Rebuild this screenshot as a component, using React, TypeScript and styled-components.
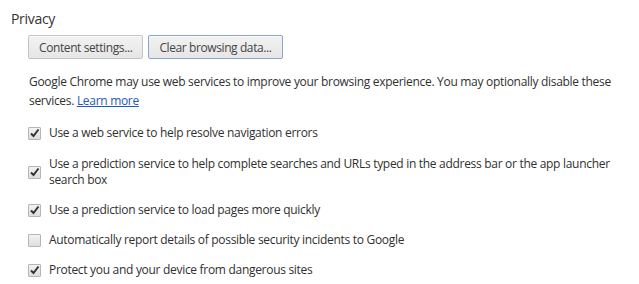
import React from "react";
import styled, { createGlobalStyle } from "styled-components";

const Global = createGlobalStyle`
  html, body { margin: 0; padding: 0; background: #fff; }
  body { font-family: "Open Sans", "Noto Sans", sans-serif; color: #303030; letter-spacing: -0.3px; }
`;

const Page = styled.div`
  padding: 9px 0 0 11px;
  width: 628px;
`;

const Title = styled.h3`
  margin: 0;
  font-size: 14px;
  font-weight: 400;
  line-height: 20px;
  color: #333;
`;

const Body = styled.div`
  padding-left: 17px;
  margin-top: 6px;
`;

const ButtonRow = styled.div`
  display: flex;
  gap: 5px;
`;

const Button = styled.button<{ $focused?: boolean }>`
  height: 24px;
  padding: 0 10px;
  font-family: inherit;
  letter-spacing: -0.4px;
  font-size: 12px;
  color: #444;
  border-radius: 2px;
  border: 1px solid ${(p) => (p.$focused ? "#8aa6cc" : "#c4c4c4")};
  background: linear-gradient(#f2f2f2, #e6e6e6);
  box-shadow: inset 0 1px 0 #fbfbfb;
`;

const Para = styled.p`
  margin: 13px 0 0 1px;
  font-size: 12px;
  line-height: 19px;
  width: 595px;
`;

const Link = styled.a`
  color: #2458b8;
  text-decoration: underline;
`;

const List = styled.div`
  margin-top: 15px;
  display: flex;
  flex-direction: column;
  gap: 14px;
`;

const Row = styled.label<{ $multi?: boolean }>`
  display: flex;
  align-items: center;
  gap: 8px;
  font-size: 12px;
  line-height: 16px;
  margin-top: ${(p) => (p.$multi ? "1px" : "0")};
`;

const Box = styled.span`
  flex: none;
  width: 13px;
  height: 13px;
  box-sizing: border-box;
  border: 1px solid #b5b5b5;
  border-radius: 1px;
  background: linear-gradient(#f2f2f2, #dedede);
  display: flex;
  align-items: center;
  justify-content: center;
`;

const Label = styled.span`
  max-width: 575px;
`;

const Check = ({ checked }: { checked: boolean }) => (
  <Box>
    {checked && (
      <svg width="11" height="11" viewBox="0 0 11 11">
        <path d="M2 5.5 L4.5 8 L9.5 1.5" fill="none" stroke="#333" strokeWidth="2" />
      </svg>
    )}
  </Box>
);

const items = [
  { text: "Use a web service to help resolve navigation errors", checked: true },
  {
    text: "Use a prediction service to help complete searches and URLs typed in the address bar or the app launcher search box",
    checked: true,
    multi: true,
  },
  { text: "Use a prediction service to load pages more quickly", checked: true },
  { text: "Automatically report details of possible security incidents to Google", checked: false },
  { text: "Protect you and your device from dangerous sites", checked: true },
];

export default function App() {
  return (
    <>
      <Global />
      <Page>
        <Title>Privacy</Title>
        <Body>
          <ButtonRow>
            <Button>Content settings...</Button>
            <Button $focused>Clear browsing data...</Button>
          </ButtonRow>
          <Para>
            Google Chrome may use web services to improve your browsing experience. You may optionally disable these
            services. <Link href="#">Learn more</Link>
          </Para>
          <List>
            {items.map((it) => (
              <Row key={it.text} $multi={it.multi}>
                <Check checked={it.checked} />
                <Label>{it.text}</Label>
              </Row>
            ))}
          </List>
        </Body>
      </Page>
    </>
  );
}
